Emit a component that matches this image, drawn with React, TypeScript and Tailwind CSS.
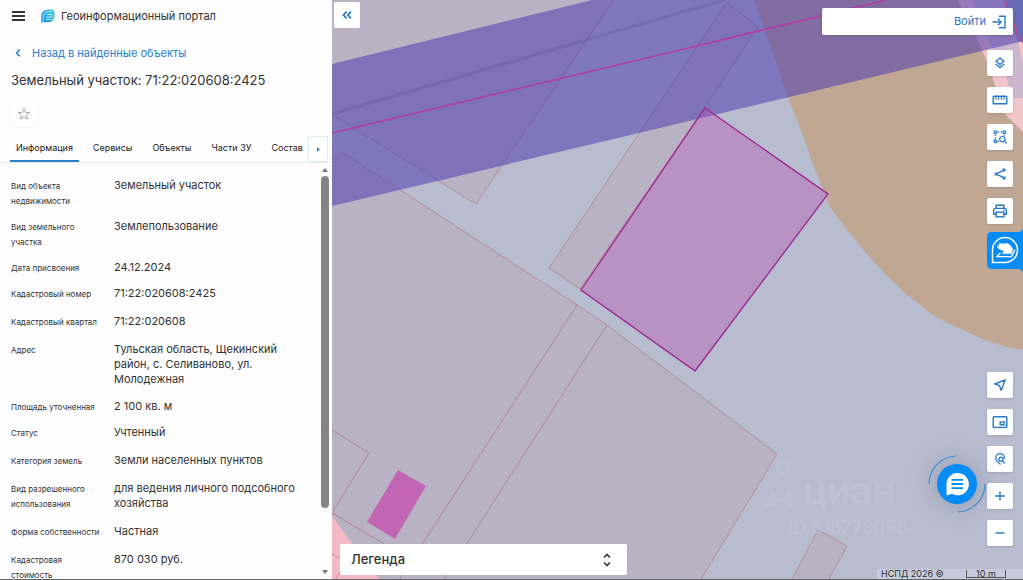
import { useState, type ReactNode } from 'react'
import clsx from 'clsx'

const tabs = ['Информация', 'Сервисы', 'Объекты', 'Части ЗУ', 'Состав']

const details = [
  { label: 'Вид объекта недвижимости', value: 'Земельный участок', tight: true },
  { label: 'Вид земельного участка', value: 'Землепользование', tight: true },
  { label: 'Дата присвоения', value: '24.12.2024', tight: true },
  { label: 'Кадастровый номер', value: '71:22:020608:2425' },
  { label: 'Кадастровый квартал', value: '71:22:020608' },
  { label: 'Адрес', value: 'Тульская область, Щекинский район, с. Селиваново, ул. Молодежная' },
  { label: 'Площадь уточненная', value: '2 100 кв. м', tight: true },
  { label: 'Статус', value: 'Учтенный' },
  { label: 'Категория земель', value: 'Земли населенных пунктов' },
  { label: 'Вид разрешенного использования', value: 'для ведения личного подсобного хозяйства' },
  { label: 'Форма собственности', value: 'Частная' },
  { label: 'Кадастровая стоимость', value: '870 030 руб.' }
]

function Icon({ children, className = 'size-4' }: { children: ReactNode; className?: string }) {
  return (
    <svg
      viewBox="0 0 16 16"
      className={className}
      fill="none"
      stroke="currentColor"
      strokeWidth="1.4"
      aria-hidden="true"
    >
      {children}
    </svg>
  )
}

const topTools = [
  {
    name: 'Слои',
    icon: (
      <>
        <path d="M8 3 L12 6.3 L8 9.6 L4 6.3 Z" strokeWidth="1.3" />
        <path d="M3.6 9 L8 12.6 L12.4 9" strokeWidth="1.3" />
      </>
    )
  },
  {
    name: 'Измерения',
    icon: (
      <>
        <rect x="1.2" y="4.2" width="13.6" height="7.6" rx="0.8" />
        <path d="M4 4.5v3.2M6.7 4.5v3.2M9.3 4.5v3.2M12 4.5v3.2" strokeWidth="1.2" />
      </>
    )
  },
  {
    name: 'Поиск по области',
    icon: (
      <g strokeWidth="1.2">
        <circle cx="3.3" cy="3.3" r="1.4" />
        <circle cx="12.3" cy="3.3" r="1.4" />
        <circle cx="3.3" cy="12.3" r="1.4" />
        <path d="M5.6 3.2h1.6M8.6 3.2h1.6M3.3 5.6v1.6M3.3 8.7v1.6M12.3 5.4v1.4M5.4 12.4h1.6" />
        <circle cx="10.4" cy="10.2" r="2.7" />
        <path d="M12.4 12.2 L14.8 14.6" />
      </g>
    )
  },
  {
    name: 'Поделиться',
    icon: (
      <g strokeWidth="1.3">
        <circle cx="4.2" cy="8" r="1.1" />
        <circle cx="12" cy="4" r="1.1" />
        <circle cx="12" cy="12" r="1.1" />
        <path d="M5.3 7.4 L10.9 4.6M5.3 8.6 L10.9 11.4" />
      </g>
    )
  },
  {
    name: 'Печать',
    icon: (
      <>
        <path d="M4.2 5.2V2.2h7.6v3" />
        <path d="M4 11.2H1.7V7.2c0-1.1.8-1.8 1.8-1.8h9c1 0 1.8.7 1.8 1.8v4H12" />
        <rect x="4.2" y="9.2" width="7.6" height="4.6" />
        <path d="M11.2 7.4h1.4" strokeWidth="1.1" />
      </>
    )
  }
]

const bottomTools = [
  {
    name: 'Моё местоположение',
    icon: <path d="M13.2 2.8 L2.8 7 L7.5 8.7 L9.2 13.4 Z" strokeWidth="1.4" strokeLinejoin="round" />
  },
  {
    name: 'Обзорная карта',
    icon: (
      <>
        <rect x="1.2" y="2.8" width="13.6" height="10.6" rx="0.8" />
        <rect x="8.2" y="8" width="4" height="2.8" />
      </>
    )
  },
  {
    name: 'Поиск по точке',
    icon: (
      <g strokeWidth="1.3">
        <path d="M8.6 13.4C6 11.5 3.8 9.4 3.8 7A4.3 4.3 0 0 1 12.4 7v1" />
        <circle cx="9" cy="8.2" r="2" />
        <path d="M10.5 9.7 L12.6 12.4" />
      </g>
    )
  },
  { name: 'Приблизить', icon: <path d="M8 3.4v9.2M3.4 8h9.2" /> },
  { name: 'Отдалить', icon: <path d="M3.4 8h9.2" /> }
]

function ToolButton({ name, children }: { name: string; children: ReactNode }) {
  return (
    <button
      type="button"
      aria-label={name}
      className="flex size-[26px] items-center justify-center rounded-xs bg-white text-[#2779c8] shadow-sm"
    >
      <Icon>{children}</Icon>
    </button>
  )
}

function ParcelMap() {
  return (
    <svg
      viewBox="332 0 691 580"
      preserveAspectRatio="xMinYMin slice"
      className="absolute inset-0 size-full"
      aria-hidden="true"
    >
      <rect x="332" width="691" height="580" fill="#b8bccf" />

      {/* Neighbouring parcels */}
      <g fill="#b9b2c4" stroke="#b08d9b" strokeWidth="1">
        <path d="M331 -2 H615 L476 204 L331 114 Z" />
        <path d="M331 160 L342 152 L577 305 L607 325 L443 581 H331 Z" />
        <path d="M607 325 L777 454 L700 581 H443 Z" />
        <path d="M549 268 L727 2 L758 27 L705 107 L580 289 Z" />
        <path d="M818 530 L847 546 L828 581 H791 Z" />
      </g>
      <path d="M332 430 L369 453 L332 513 L386 545 M577 305 L399 580" fill="none" stroke="#b0868f" />
      <path d="M332 516 L353 545 L380 580 H332 Z" fill="#f4bac5" />
      <path d="M332 554 L346 562 L335 580" fill="none" stroke="#dc858e" />

      {/* Land use zones */}
      <path
        d="M754 0 L788 97 L801 131 L816 172 L830 207 L848 231 L866 253 L886 275 L905 293 L930 313 L945 322 L967 332 L985 340 L1006 347 L1023 350 V0 Z"
        fill="#bfa793"
      />
      <path d="M958 0 L982 49 L998 93 L1006 115 L1023 132 V0 Z" fill="#f1c5cb" />
      <path d="M972 0 L993 50 L1006 77 L1013 98 H1023 V64 L1018 42 L1003 0 Z" fill="#cbb5cf" />
      <path d="M1003 0 L1018 42 L1023 41 V0 Z" fill="#7fa3bd" />

      {/* Road */}
      <path d="M332 64 L592 0 H1023 V41 L643 132 L332 206 Z" fill="#503eaf" opacity="0.55" />
      <path d="M332 114 L672 15 L725 0" fill="none" stroke="#6653a4" strokeWidth="3" opacity="0.35" />
      <path d="M332 133 L672 52 L886 0" fill="none" stroke="#b23ba5" strokeWidth="1.5" />
      <path d="M1005 0 L1017 33 L1023 43" fill="none" stroke="#cb4685" strokeWidth="1.4" />

      {/* Selected parcel and its building */}
      <path d="M705 108 L828 194 L695 371 L581 290 Z" fill="#b54fae" fillOpacity="0.38" stroke="#9d2593" strokeWidth="1.3" />
      <path d="M398 470 L426 486 L395 539 L367 522 Z" fill="#c265b3" />

      <g fill="#c5c8d8" opacity="0.45" fontFamily="Inter, sans-serif" fontWeight="600">
        <circle cx="783" cy="467" r="6" fill="none" stroke="#c5c8d8" strokeWidth="2" />
        <path d="M764 508 L772 492 L782 498 L791 488 L792 508 L783 502 Z" />
        <text x="803" y="504" fontSize="38">циан</text>
        <text x="788" y="534" fontSize="18">ID 318773096</text>
      </g>
    </svg>
  )
}

function ObjectPanel() {
  const [activeTab, setActiveTab] = useState('Информация')

  return (
    <aside className="flex w-[332px] shrink-0 flex-col bg-[#fdfdfe]">
      <header className="flex h-8 items-center pl-3">
        <button type="button" aria-label="Меню" className="flex text-[#333]">
          <svg viewBox="0 0 13 12" className="h-3 w-[13px]" stroke="currentColor" strokeWidth="1.8" aria-hidden="true">
            <path d="M0 2h13M0 6h13M0 10h13" />
          </svg>
        </button>
        <svg viewBox="0 0 14 14" className="ml-4 size-[14px]" aria-hidden="true">
          <defs>
            <linearGradient id="brand" x1="0" y1="1" x2="1" y2="0">
              <stop offset="0" stopColor="#1687e8" />
              <stop offset="1" stopColor="#3dd3dc" />
            </linearGradient>
          </defs>
          <path d="M0.3 13.3 V6.8 A6.4 6.4 0 0 1 6.7 0.4 H10 A3.7 3.7 0 0 1 13.5 4 V7 A6.3 6.3 0 0 1 7.2 13.3 Z" fill="url(#brand)" />
          <path d="M2.4 13.3 V7.6 A5 5 0 0 1 7.4 2.6 H11" fill="none" stroke="#dff8fb" strokeWidth="0.8" />
          <path d="M6 5.6h5.5M5 8h7M5 10.4h5.5" stroke="#dff8fb" strokeWidth="0.9" />
        </svg>
        <span className="ml-[6px] text-[11px] text-[#333]">Геоинформационный портал</span>
      </header>

      <a href="#results" className="mt-3 flex h-[18px] items-center pl-3 text-[11px] text-[#2b80cc]">
        <Icon className="size-3">
          <path d="M10.5 3.5 L6 8 L10.5 12.5" strokeWidth="2" />
        </Icon>
        <span className="ml-2">Назад в найденные объекты</span>
      </a>
      <h1 className="mt-2 pl-[11px] text-[13px] leading-5 text-[#333]">Земельный участок: 71:22:020608:2425</h1>

      <button
        type="button"
        aria-label="В избранное"
        className="mt-[11px] ml-[11px] flex size-[26px] items-center justify-center rounded-sm bg-white text-[#999] shadow-xs"
      >
        <Icon className="size-[14px]">
          <path
            d="M8 1.8 L9.8 6 L14.3 6.4 L10.9 9.4 L11.9 13.9 L8 11.5 L4.1 13.9 L5.1 9.4 L1.7 6.4 L6.2 6 Z"
            strokeWidth="1"
          />
        </Icon>
      </button>

      <div className="mt-[9px] flex h-[27px] shrink-0 border-b border-[#e8ebef] pl-[10px]">
        <div role="tablist" className="flex min-w-0 flex-1 gap-2 overflow-hidden">
          {tabs.map((tab) => (
            <button
              key={tab}
              type="button"
              role="tab"
              aria-selected={tab === activeTab}
              onClick={() => setActiveTab(tab)}
              className={clsx(
                'shrink-0 border-b-2 px-[6px] text-[9px] text-[#222]',
                tab === activeTab ? 'border-[#2b80cc]' : 'border-transparent'
              )}
            >
              {tab}
            </button>
          ))}
        </div>
        <button
          type="button"
          aria-label="Следующие вкладки"
          className="mr-1 flex w-5 items-center justify-center border border-[#e0ebf2] bg-white text-[#2b80cc]"
        >
          <svg viewBox="0 0 4 6" className="h-[5px] w-[3px]" fill="currentColor" aria-hidden="true">
            <path d="M0 0 L4 3 L0 6 Z" />
          </svg>
        </button>
      </div>

      <div className="flex min-h-0 flex-1">
        <dl className="min-w-0 flex-1 overflow-hidden pt-[15px] pl-[11px]">
          {details.map((row) => (
            <div key={row.label} className={clsx('flex', row.tight ? 'pb-[10px]' : 'pb-3')}>
              <dt className="w-[103px] shrink-0 pt-px pr-3 text-[8px] leading-[15px] text-[#333]">{row.label}</dt>
              <dd className="w-[190px] text-[11px] leading-[15px] text-[#333]">{row.value}</dd>
            </div>
          ))}
        </dl>
        {/* Scroll bar */}
        <div className="flex w-[14px] flex-col items-center justify-between py-[5px] text-[#777]" aria-hidden="true">
          <svg viewBox="0 0 6 4" className="h-1 w-[6px]" fill="currentColor">
            <path d="M0 4 L3 0 L6 4 Z" />
          </svg>
          <div className="my-1 w-2 flex-1">
            <div className="h-[85%] rounded-full bg-[#858585]" />
          </div>
          <svg viewBox="0 0 6 4" className="h-1 w-[6px]" fill="currentColor">
            <path d="M0 0 L3 4 L6 0 Z" />
          </svg>
        </div>
      </div>
    </aside>
  )
}

export default function App() {
  const [legendOpen, setLegendOpen] = useState(false)

  return (
    <div className="flex h-screen overflow-hidden border-b border-[#666] font-[Inter,sans-serif]">
      <ObjectPanel />

      <main className="relative min-w-0 flex-1 overflow-hidden">
        <ParcelMap />

        <button
          type="button"
          aria-label="Свернуть панель"
          className="absolute top-[2px] left-[2px] flex size-[26px] items-center justify-center rounded-xs bg-white text-[#2779c8]"
        >
          <Icon>
            <path d="M7.6 4.6 L4.4 8 L7.6 11.4 M12 4.6 L8.8 8 L12 11.4" strokeWidth="1.7" />
          </Icon>
        </button>

        {/* Map controls */}
        <div className="absolute inset-y-0 right-0 flex flex-col items-end justify-between pt-2 pb-[33px]">
          <div className="flex flex-col items-end">
            <div className="mr-[10px] mb-[15px] flex h-[27px] w-[191px] items-center justify-end rounded-xs bg-white pr-[6px] shadow-sm">
              <a href="#login" className="flex items-center gap-[5px] text-[11px] text-[#2779c8]">
                Войти
                <Icon>
                  <path d="M8 2.2h6v11.6H8M1.5 8h8.4M6.9 4.8 L10.1 8 L6.9 11.2" />
                </Icon>
              </a>
            </div>
            <div className="mr-[10px] flex flex-col gap-[11px]">
              {topTools.map((tool) => (
                <ToolButton key={tool.name} name={tool.name}>
                  {tool.icon}
                </ToolButton>
              ))}
            </div>
            <button type="button" aria-label="Помощник" className="mt-1 text-white">
              <svg viewBox="0 0 36 45" className="h-[45px] w-9" fill="none" aria-hidden="true">
                <path d="M5 4 H31 Q35 4 36 0 V45 Q35 41 31 41 H5 Q0 41 0 36 V9 Q0 4 5 4 Z" fill="#078bf5" />
                <g transform="translate(4 8)" stroke="currentColor">
                  <path d="M1.5 26.5 V14 A12.5 12.5 0 1 1 14 26.5 Z" strokeWidth="1.5" />
                  <path
                    d="M6.5 9.8 L8.6 9 L8.4 7.2 L11.4 8 L16.4 7.6 L19.4 9.5 L21.6 13 L20.4 17.6 H11.4 L13.4 15 L9 13.4 L6.8 11.6 Z"
                    fill="currentColor"
                    strokeWidth="0.6"
                  />
                  <path d="M9.6 16.6 L6 20.6 H20.4 L24 13.6" strokeWidth="1.4" />
                </g>
              </svg>
            </button>
          </div>

          <div className="mr-[10px] flex flex-col gap-[11px]">
            {bottomTools.map((tool) => (
              <ToolButton key={tool.name} name={tool.name}>
                {tool.icon}
              </ToolButton>
            ))}
          </div>
        </div>

        <button type="button" aria-label="Чат" className="absolute right-[37px] bottom-[66px]">
          <svg
            viewBox="0 0 58 58"
            className="size-[58px] overflow-visible drop-shadow-[0_0_12px_rgba(70,75,95,0.35)]"
            fill="none"
            aria-hidden="true"
          >
            <path d="M1 29 A28 28 0 0 1 28 1 M57 29 A28 28 0 0 1 30 57" stroke="#3c8fd5" strokeWidth="1.2" />
            <circle cx="29" cy="29" r="20" fill="#078bf5" />
            <path d="M18.5 40.5 V29 A11.2 11.2 0 1 1 24 38.8 Z" fill="#fff" />
            <path d="M23.5 24.8h11.5M23.5 29h11.5M23.5 33.2h11.5" stroke="#078bf5" strokeWidth="1.8" />
          </svg>
        </button>

        <button
          type="button"
          aria-expanded={legendOpen}
          onClick={() => setLegendOpen(!legendOpen)}
          className="absolute bottom-1 left-2 flex h-[31px] w-[287px] items-center justify-between rounded-xs bg-white pr-3 pl-[11px] text-[13px] font-medium text-[#333]"
        >
          Легенда
          <Icon>
            <path d="M5 5.5 L8 2.5 L11 5.5 M5 10.5 L8 13.5 L11 10.5" strokeWidth="1.6" />
          </Icon>
        </button>

        <footer className="absolute right-0 bottom-0 flex h-[10px] w-[146px] items-center justify-between bg-[#c5cbdc] pr-[17px] pl-1 text-[9px] leading-[10px] text-[#333]">
          <span>НСПД 2026 ©</span>
          <span className="h-2 w-10 border-x border-b border-[#555] text-center leading-[8px]">10 m</span>
        </footer>
      </main>
    </div>
  )
}
